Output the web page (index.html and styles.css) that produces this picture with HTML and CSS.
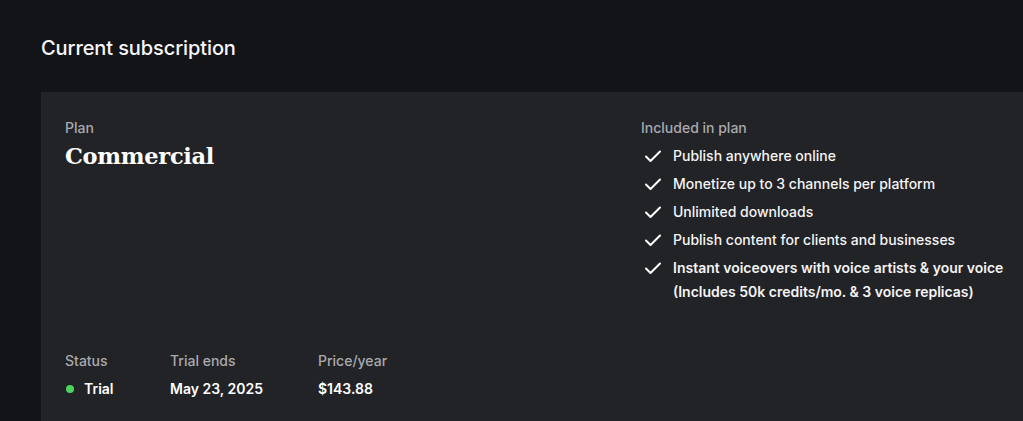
FILE: index.html
```html
<!DOCTYPE html>
<html>
<head>
<meta charset="utf-8">
<link rel="stylesheet" href="styles.css">
</head>
<body>
<div class="page">
  <h1 class="title">Current subscription</h1>
  <section class="card">
    <div class="top">
      <div class="plan">
        <div class="label">Plan</div>
        <div class="plan-name">Commercial</div>
      </div>
      <div class="included">
        <div class="label">Included in plan</div>
        <ul class="features">
          <li><svg class="check" viewBox="0 0 20 20"><path d="M3 10.5l4.5 4.5L17 5.5" /></svg><span>Publish anywhere online</span></li>
          <li><svg class="check" viewBox="0 0 20 20"><path d="M3 10.5l4.5 4.5L17 5.5" /></svg><span>Monetize up to 3 channels per platform</span></li>
          <li><svg class="check" viewBox="0 0 20 20"><path d="M3 10.5l4.5 4.5L17 5.5" /></svg><span>Unlimited downloads</span></li>
          <li><svg class="check" viewBox="0 0 20 20"><path d="M3 10.5l4.5 4.5L17 5.5" /></svg><span>Publish content for clients and businesses</span></li>
          <li class="strong"><svg class="check" viewBox="0 0 20 20"><path d="M3 10.5l4.5 4.5L17 5.5" /></svg><span>Instant voiceovers with voice artists &amp; your voice<br>(Includes 50k credits/mo. &amp; 3 voice replicas)</span></li>
        </ul>
      </div>
    </div>
    <div class="meta">
      <div class="meta-item">
        <div class="label">Status</div>
        <div class="value status"><span class="dot"></span>Trial</div>
      </div>
      <div class="meta-item">
        <div class="label">Trial ends</div>
        <div class="value">May 23, 2025</div>
      </div>
      <div class="meta-item">
        <div class="label">Price/year</div>
        <div class="value">$143.88</div>
      </div>
    </div>
  </section>
</div>
</body>
</html>
```

FILE: styles.css
```css
html, body {
  margin: 0;
  padding: 0;
  background: #131418;
  overflow: hidden;
}
body {
  font-family: Inter, "Noto Sans", sans-serif;
  color: #f4f4f5;
  width: 1023px;
  height: 421px;
}
.page {
  padding: 34px 0 0 41px;
}
.title {
  margin: 0;
  font-size: 20px;
  line-height: 28px;
  font-weight: 500;
  color: #f7f7f8;
  letter-spacing: -0.1px;
}
.card {
  margin-top: 30px;
  width: 982px;
  height: 329px;
  box-sizing: border-box;
  background: #222326;
  padding: 26px 24px 0 24px;
}
.top {
  display: grid;
  grid-template-columns: 576px 1fr;
}
.label {
  font-size: 14px;
  line-height: 20px;
  font-weight: 500;
  color: #a9a9ae;
}
.plan-name {
  font-family: "DejaVu Serif", "Liberation Serif", serif;
  font-weight: 700;
  font-size: 22.5px;
  line-height: 32px;
  margin-top: 2px;
  color: #ffffff;
  letter-spacing: -0.3px;
}
.features {
  list-style: none;
  margin: 0;
  padding: 0;
  margin-top: 6px;
}
.features li {
  display: flex;
  align-items: flex-start;
  font-size: 14px;
  line-height: 24px;
  font-weight: 500;
  margin-bottom: 4px;
  color: #f4f4f5;
  white-space: nowrap;
}
.features li.strong {
  font-weight: 600;
}
.check {
  width: 20px;
  height: 20px;
  margin: 2px 10px 0 2px;
  flex: none;
  fill: none;
  stroke: #ffffff;
  stroke-width: 2;
  stroke-linecap: round;
  stroke-linejoin: round;
}
.meta {
  display: flex;
  margin-top: 43px;
}
.meta-item:nth-child(1) { width: 105px; }
.meta-item:nth-child(2) { width: 148px; }
.value {
  font-size: 14px;
  line-height: 20px;
  font-weight: 600;
  color: #ffffff;
  margin-top: 8px;
}
.status {
  display: flex;
  align-items: center;
}
.dot {
  width: 8px;
  height: 8px;
  border-radius: 50%;
  background: #4ed25f;
  margin: 0 10px 0 1px;
}
```
